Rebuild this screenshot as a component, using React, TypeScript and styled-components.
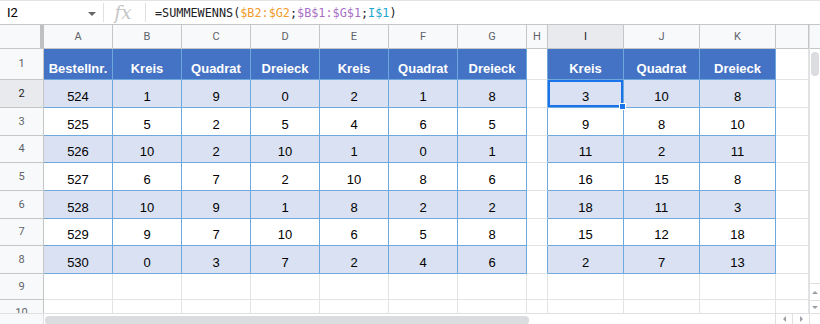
import React from 'react';
import styled, { createGlobalStyle, css } from 'styled-components';

const GlobalStyle = createGlobalStyle`
  html, body { margin: 0; padding: 0; background: #ffffff; }
  body { font-family: 'Liberation Sans', Arial, sans-serif; }
  * { box-sizing: border-box; }
`;

const GRID_LINE = '#e2e3e3';
const HEAD_LINE = '#c4c7c5';
const TABLE_LINE = '#6fa8dc';

const COL_WIDTHS = [44, 69, 69, 69, 69, 69, 69, 69, 21, 76, 76, 76, 33];
const ROW_HEIGHTS = [24, 31, 28, 28, 27, 28, 28, 27, 28, 26, 26];
const LETTERS = ['A', 'B', 'C', 'D', 'E', 'F', 'G', 'H', 'I', 'J', 'K', ''];

const LEFT_HEAD = ['Bestellnr.', 'Kreis', 'Quadrat', 'Dreieck', 'Kreis', 'Quadrat', 'Dreieck'];
const LEFT_DATA = [
  [524, 1, 9, 0, 2, 1, 8],
  [525, 5, 2, 5, 4, 6, 5],
  [526, 10, 2, 10, 1, 0, 1],
  [527, 6, 7, 2, 10, 8, 6],
  [528, 10, 9, 1, 8, 2, 2],
  [529, 9, 7, 10, 6, 5, 8],
  [530, 0, 3, 7, 2, 4, 6],
];
const RIGHT_HEAD = ['Kreis', 'Quadrat', 'Dreieck'];
const RIGHT_DATA = [
  [3, 10, 8],
  [9, 8, 10],
  [11, 2, 11],
  [16, 15, 8],
  [18, 11, 3],
  [15, 12, 18],
  [2, 7, 13],
];

const Page = styled.div`
  width: 820px;
  height: 324px;
  overflow: hidden;
  display: flex;
  flex-direction: column;
  background: #fff;
`;

/* ---------- formula bar ---------- */
const FormulaBar = styled.div`
  height: 25px;
  flex: 0 0 25px;
  display: flex;
  align-items: center;
  border-top: 1px solid #e3e3e3;
  border-bottom: 1px solid ${HEAD_LINE};
`;

const NameBox = styled.div`
  width: 103px;
  height: 100%;
  display: flex;
  align-items: center;
  justify-content: space-between;
  padding: 0 7px 0 7px;
  font-family: Roboto, 'Liberation Sans', sans-serif;
  font-size: 13px;
  color: #000;
`;

const Caret = styled.span`
  width: 0;
  height: 0;
  border-left: 4px solid transparent;
  border-right: 4px solid transparent;
  border-top: 4px solid #666;
  margin-top: 2px;
`;

const Divider = styled.div`
  width: 1px;
  height: 19px;
  background: #e0e0e0;
`;

const FxBox = styled.div`
  width: 41px;
  display: flex;
  justify-content: center;
  font-family: 'DejaVu Serif', 'Liberation Serif', serif;
  font-style: italic;
  font-size: 18px;
  color: #c4c4c4;
  line-height: 20px;
  padding-right: 3px;
`;

const FormulaText = styled.div`
  margin-left: 9px;
  font-family: 'DejaVu Sans Mono', 'Liberation Mono', monospace;
  font-size: 11.8px;
  color: #202124;
  white-space: pre;
  padding-top: 1px;
`;

const Ref = styled.span<{ $c: string }>`
  color: ${(p) => p.$c};
`;

/* ---------- sheet area ---------- */
const Main = styled.div`
  flex: 0 0 288px;
  height: 288px;
  display: flex;
`;

const GridWrap = styled.div`
  width: 809px;
  height: 288px;
  overflow: hidden;
`;

const Grid = styled.div`
  display: grid;
  grid-template-columns: ${COL_WIDTHS.map((w) => `${w}px`).join(' ')};
  grid-template-rows: ${ROW_HEIGHTS.map((h) => `${h}px`).join(' ')};
`;

const Corner = styled.div`
  background: #f8f9fa;
  border-right: 4px solid #c0c0c0;
  border-bottom: 1px solid ${HEAD_LINE};
`;

const ColHead = styled.div<{ $active?: boolean }>`
  display: flex;
  align-items: center;
  justify-content: center;
  background: ${(p) => (p.$active ? '#e8eaed' : '#f8f9fa')};
  border-right: 1px solid ${HEAD_LINE};
  border-bottom: 1px solid ${HEAD_LINE};
  font-family: Roboto, 'Liberation Sans', sans-serif;
  font-size: 11px;
  color: ${(p) => (p.$active ? '#202124' : '#5f6368')};
`;

const RowHead = styled.div<{ $active?: boolean }>`
  display: flex;
  align-items: center;
  justify-content: center;
  background: ${(p) => (p.$active ? '#e8eaed' : '#f8f9fa')};
  border-right: 1px solid ${HEAD_LINE};
  border-bottom: 1px solid ${HEAD_LINE};
  font-family: Roboto, 'Liberation Sans', sans-serif;
  font-size: 11px;
  color: ${(p) => (p.$active ? '#202124' : '#5f6368')};
  padding-bottom: 1px;
`;

type Tone = 'head' | 'band' | 'plain' | 'blank';

const Cell = styled.div<{ $tone: Tone; $blueRight?: boolean }>`
  position: relative;
  display: flex;
  align-items: flex-end;
  justify-content: center;
  padding-bottom: 2px;
  line-height: 16px;
  font-size: 13px;
  color: #000;
  border-right: 1px solid ${(p) => (p.$tone !== 'blank' || p.$blueRight ? TABLE_LINE : GRID_LINE)};
  border-bottom: 1px solid ${(p) => (p.$tone !== 'blank' ? TABLE_LINE : GRID_LINE)};
  background: ${(p) => (p.$tone === 'head' ? '#4472c4' : p.$tone === 'band' ? '#d9e1f2' : '#ffffff')};
  ${(p) =>
    p.$tone === 'head' &&
    css`
      color: #ffffff;
      font-weight: bold;
      padding-bottom: 2px;
    `}
`;

const Selection = styled.div`
  position: absolute;
  inset: 0;
  border: 2px solid #1a73e8;
  pointer-events: none;
  z-index: 2;
`;

const Handle = styled.div`
  position: absolute;
  right: -5px;
  bottom: -5px;
  width: 7px;
  height: 7px;
  background: #1a73e8;
  border: 1px solid #ffffff;
  z-index: 3;
`;

/* ---------- scrollbars ---------- */
const VScroll = styled.div`
  width: 11px;
  height: 288px;
  display: flex;
  flex-direction: column;
  border-left: 1px solid #e0e0e0;
`;

const VHeadSpace = styled.div`
  height: 24px;
  flex: 0 0 24px;
  background: #f8f9fa;
  border-bottom: 1px solid ${HEAD_LINE};
`;

const VTrack = styled.div`
  flex: 1;
  padding: 3px 1px 0 1px;
`;

const VThumb = styled.div`
  height: 24px;
  width: 8px;
  border-radius: 4px;
  background: #dadce0;
`;

const ArrowBox = styled.div<{ $h: number; $w?: number }>`
  height: ${(p) => p.$h}px;
  width: ${(p) => (p.$w ? `${p.$w}px` : 'auto')};
  flex: 0 0 auto;
  display: flex;
  align-items: center;
  justify-content: center;
  border-top: 1px solid #e0e0e0;
`;

const Tri = styled.span<{ $dir: 'up' | 'down' | 'left' | 'right' }>`
  width: 0;
  height: 0;
  ${(p) =>
    p.$dir === 'up'
      ? css`
          border-left: 3px solid transparent;
          border-right: 3px solid transparent;
          border-bottom: 3px solid #9aa0a6;
        `
      : p.$dir === 'down'
      ? css`
          border-left: 3px solid transparent;
          border-right: 3px solid transparent;
          border-top: 3px solid #9aa0a6;
        `
      : p.$dir === 'left'
      ? css`
          border-top: 3px solid transparent;
          border-bottom: 3px solid transparent;
          border-right: 3px solid #9aa0a6;
        `
      : css`
          border-top: 3px solid transparent;
          border-bottom: 3px solid transparent;
          border-left: 3px solid #9aa0a6;
        `}
`;

const HScroll = styled.div`
  flex: 0 0 11px;
  height: 11px;
  display: flex;
  border-top: 1px solid #e0e0e0;
`;

const HLeft = styled.div`
  width: 44px;
  border-right: 1px solid #e0e0e0;
  background: #f8f9fa;
`;

const HTrack = styled.div`
  width: 731px;
  padding: 2px 0 0 1px;
`;

const HThumb = styled.div`
  width: 484px;
  height: 9px;
  border-radius: 4px;
  background: #dadce0;
`;

const HArrow = styled.div`
  width: 17px;
  display: flex;
  align-items: center;
  justify-content: center;
  border-left: 1px solid #e0e0e0;
`;

const HCorner = styled.div`
  flex: 1;
  border-left: 1px solid #e0e0e0;
`;

function renderCells() {
  const out: React.ReactNode[] = [];
  // header row
  out.push(<Corner key="corner" />);
  LETTERS.forEach((l, i) => {
    out.push(
      <ColHead key={`h${i}`} $active={l === 'I'}>
        {l}
      </ColHead>
    );
  });
  for (let n = 1; n <= 10; n++) {
    out.push(
      <RowHead key={`r${n}`} $active={n === 2}>
        {n}
      </RowHead>
    );
    for (let c = 1; c <= 12; c++) {
      const inLeft = n <= 8 && c >= 1 && c <= 7;
      const inRight = n <= 8 && c >= 9 && c <= 11;
      let tone: Tone = 'blank';
      let text: React.ReactNode = null;
      if (inLeft || inRight) {
        tone = n === 1 ? 'head' : n % 2 === 0 ? 'band' : 'plain';
        if (inLeft) text = n === 1 ? LEFT_HEAD[c - 1] : LEFT_DATA[n - 2][c - 1];
        else text = n === 1 ? RIGHT_HEAD[c - 9] : RIGHT_DATA[n - 2][c - 9];
      }
      const selected = n === 2 && c === 9;
      out.push(
        <Cell key={`c${n}-${c}`} $tone={tone} $blueRight={c === 8 && n <= 8}>
          {text}
          {selected && (
            <Selection>
              <Handle />
            </Selection>
          )}
        </Cell>
      );
    }
  }
  return out;
}

export default function App() {
  return (
    <>
      <GlobalStyle />
      <Page>
        <FormulaBar>
          <NameBox>
            <span>I2</span>
            <Caret />
          </NameBox>
          <Divider />
          <FxBox>fx</FxBox>
          <Divider />
          <FormulaText>
            =SUMMEWENNS(<Ref $c="#f29b2a">$B2:$G2</Ref>;<Ref $c="#a86fc6">$B$1:$G$1</Ref>;
            <Ref $c="#1ea7cf">I$1</Ref>)
          </FormulaText>
        </FormulaBar>
        <Main>
          <GridWrap>
            <Grid>{renderCells()}</Grid>
          </GridWrap>
          <VScroll>
            <VHeadSpace />
            <VTrack>
              <VThumb />
            </VTrack>
            <ArrowBox $h={17}>
              <Tri $dir="up" />
            </ArrowBox>
            <ArrowBox $h={13}>
              <Tri $dir="down" />
            </ArrowBox>
          </VScroll>
        </Main>
        <HScroll>
          <HLeft />
          <HTrack>
            <HThumb />
          </HTrack>
          <HArrow>
            <Tri $dir="left" />
          </HArrow>
          <HArrow>
            <Tri $dir="right" />
          </HArrow>
          <HCorner />
        </HScroll>
      </Page>
    </>
  );
}
